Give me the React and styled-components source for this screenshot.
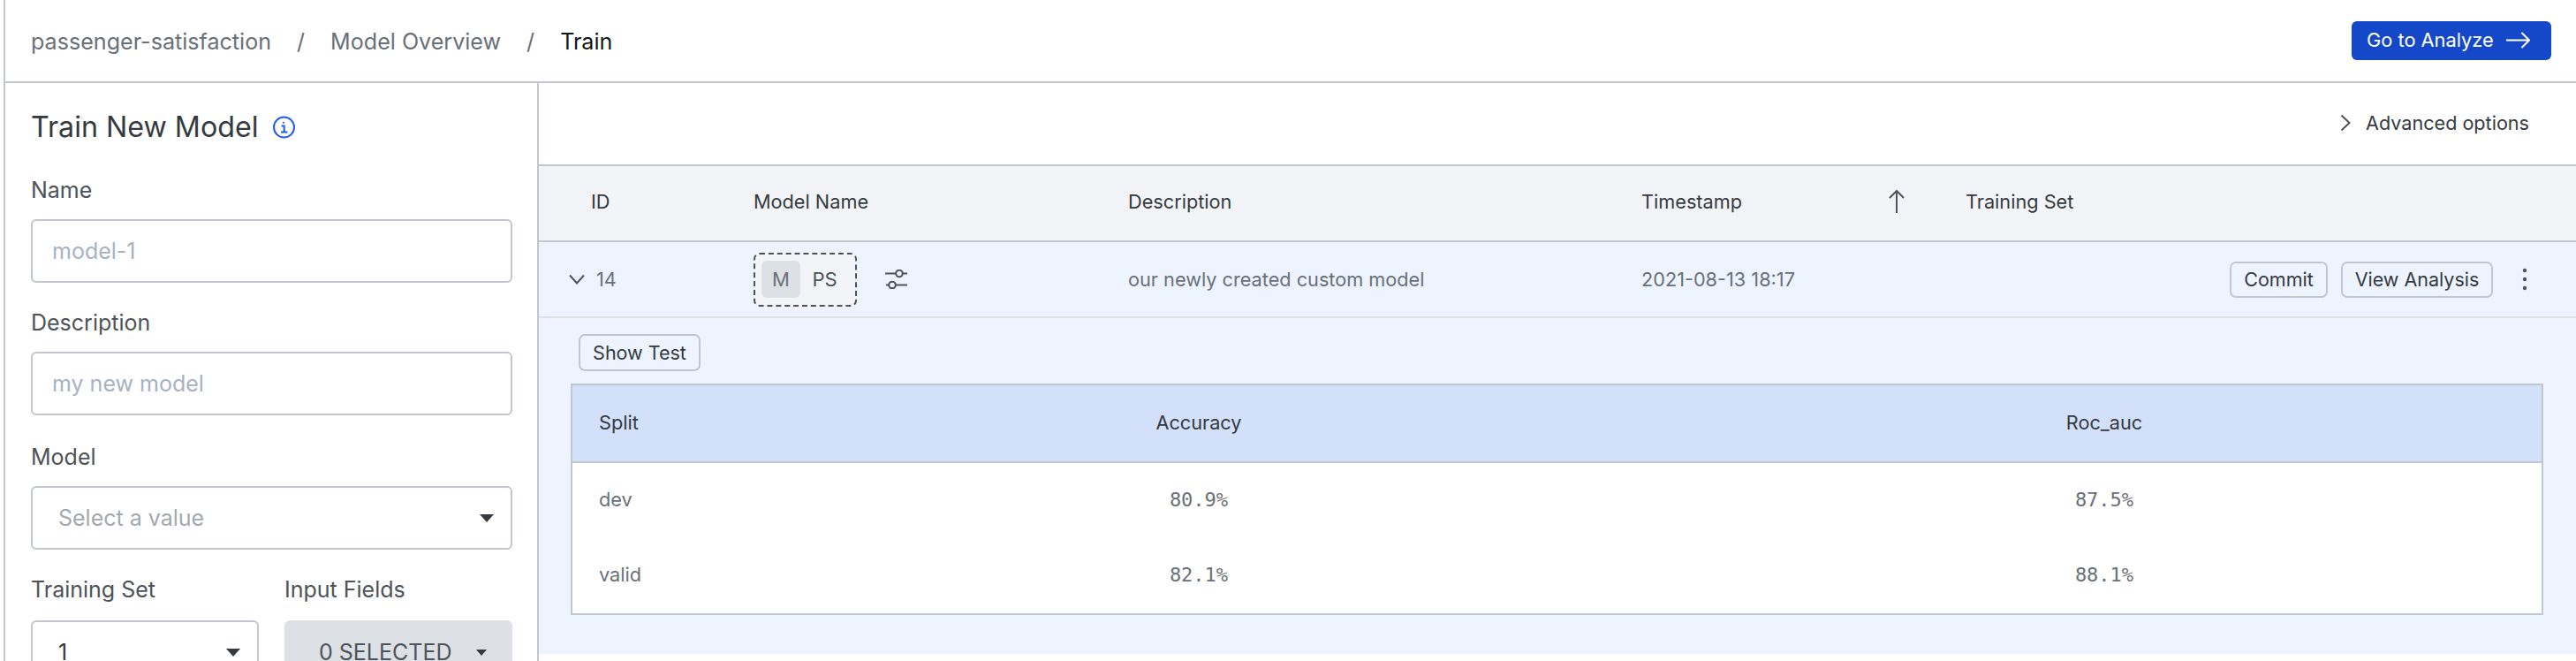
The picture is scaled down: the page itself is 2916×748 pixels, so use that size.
import React from 'react';
import styled, { createGlobalStyle } from 'styled-components';

const Global = createGlobalStyle`
  html, body { margin: 0; padding: 0; background: #fff; }
  * { box-sizing: border-box; }
  body { font-family: Inter, "Liberation Sans", sans-serif; }
`;

const line = '#c1c7cd';

const Page = styled.div`
  width: 2916px;
  height: 748px;
  padding-left: 4px;
  overflow: hidden;
  background: #fff;
`;
const Frame = styled.div`
  height: 748px;
  border-left: 2px solid ${line};
`;
const TopBar = styled.header`
  height: 94px;
  border-bottom: 2px solid ${line};
  display: flex;
  align-items: center;
  justify-content: space-between;
  padding: 0 28px 0 29px;
`;
const Crumbs = styled.nav`
  display: flex;
  align-items: center;
  margin-top: 2px;
  font-size: 25.1px;
  line-height: 32px;
  color: #697077;
`;
const Crumb = styled.span`
  color: ${(p) => (p.$active ? '#121619' : '#697077')};
`;
const Slash = styled.span`
  margin: 0 29px;
`;
const PrimaryButton = styled.button`
  width: 226px;
  height: 44px;
  border: none;
  border-radius: 6px;
  background: #1448c8;
  color: #fff;
  font: 400 21.8px Inter, sans-serif;
  display: flex;
  align-items: center;
  gap: 14px;
  padding: 0 0 2px 17px;
`;
const Body = styled.div`
  display: flex;
  height: 654px;
`;
const Sidebar = styled.aside`
  width: 604px;
  flex: none;
  border-right: 2px solid ${line};
  padding: 34px 28px 0 29px;
`;
const Title = styled.h2`
  margin: 0 0 41px;
  display: flex;
  align-items: center;
  gap: 17px;
  font-weight: 400;
  font-size: 32.2px;
  line-height: 32px;
  color: #343a3f;
`;
const Field = styled.div`
  margin-bottom: ${(p) => p.$gap ?? 31}px;
`;
const Label = styled.label`
  display: block;
  margin-bottom: ${(p) => p.$gap ?? 19}px;
  font-size: 25px;
  line-height: 28px;
  color: #4d5358;
`;
const TextInput = styled.input`
  display: block;
  width: 100%;
  height: 72px;
  border: 2px solid ${line};
  border-radius: 6px;
  padding: 0 22px;
  font: 400 25px Inter, sans-serif;
  outline: none;
  &::placeholder { color: #a7b2c2; opacity: 1; }
`;
const Select = styled.div`
  height: 72px;
  border: 2px solid ${line};
  border-radius: 6px;
  padding: 0 19px 0 29px;
  display: flex;
  align-items: center;
  justify-content: space-between;
  font-size: 25px;
  color: ${(p) => (p.$empty ? '#a2a9b0' : '#343a3f')};
`;
const Split = styled.div`
  display: grid;
  grid-template-columns: 258px 258px;
  column-gap: 29px;
`;
const MultiSelect = styled.div`
  height: 72px;
  border-radius: 6px;
  background: #dde1e6;
  display: flex;
  align-items: center;
  gap: 27px;
  padding-left: 39px;
  font-size: 25px;
  color: #4d5358;
`;
const Caret = styled.span`
  width: 0;
  height: 0;
  border-left: ${(p) => p.$size}px solid transparent;
  border-right: ${(p) => p.$size}px solid transparent;
  border-top: ${(p) => p.$size + 1}px solid #343a3f;
`;
const Main = styled.main`
  flex: 1;
  min-width: 0;
`;
const OptionsBar = styled.div`
  height: 94px;
  border-bottom: 2px solid ${line};
  display: flex;
  align-items: center;
  justify-content: flex-end;
  gap: 17px;
  padding: 0 53px 3px 0;
  font-size: 21.6px;
  color: #343a3f;
`;
const columns = '243px 424px 581px 367px 1fr';
const HeadRow = styled.div`
  height: 86px;
  border-bottom: 2px solid ${line};
  background: #f2f4f8;
  display: grid;
  grid-template-columns: ${columns};
  align-items: center;
  padding-bottom: 4px;
  font-size: 21.7px;
  color: #343a3f;
`;
const IdHead = styled.div`
  padding-left: 59px;
`;
const SortCell = styled.div`
  display: flex;
  align-items: center;
  justify-content: space-between;
  padding-right: 68px;
`;
const DataRow = styled.div`
  height: 86px;
  border-bottom: 2px solid #dde1e6;
  background: #edf4ff;
  display: grid;
  grid-template-columns: ${columns};
  align-items: center;
  font-size: 21.7px;
  color: #697077;
`;
const IdCell = styled.div`
  display: flex;
  align-items: center;
  gap: 13px;
  padding-left: 34px;
`;
const NameCell = styled.div`
  display: flex;
  align-items: center;
  gap: 32px;
`;
const Toggle = styled.div`
  width: 117px;
  height: 61px;
  border: 2px dashed #4d5358;
  border-radius: 7px;
  background: #f2f4f8;
  display: flex;
  align-items: center;
  padding-left: 7px;
`;
const ToggleItem = styled.span`
  width: ${(p) => (p.$on ? 44 : 55)}px;
  height: 42px;
  border-radius: 6px;
  background: ${(p) => (p.$on ? '#dde1e6' : 'transparent')};
  color: ${(p) => (p.$on ? '#697077' : '#4d5358')};
  display: flex;
  align-items: center;
  justify-content: center;
  font-size: 22px;
`;
const ActionCell = styled.div`
  display: flex;
  align-items: center;
  justify-content: flex-end;
  gap: 15px;
  padding-right: 55px;
`;
const OutlineButton = styled.button`
  height: ${(p) => p.$height}px;
  width: ${(p) => p.$width}px;
  flex: none;
  padding: 0;
  border: 2px solid ${line};
  border-radius: 7px;
  background: transparent;
  color: #343a3f;
  font: 400 21.5px Inter, sans-serif;
`;
const Kebab = styled.span`
  display: flex;
  margin-left: 18px;
`;
const Expanded = styled.section`
  height: 380px;
  background: #edf4ff;
  padding: 18px 37px 0 36px;
`;
const ShowRow = styled.div`
  padding-left: 9px;
  margin-bottom: 14px;
  display: flex;
`;
const InnerTable = styled.div`
  height: 262px;
  border: 2px solid ${line};
  background: #fff;
`;
const innerColumns = '179px 1060px 1fr';
const InnerHead = styled.div`
  height: 88px;
  border-bottom: 2px solid ${line};
  background: #d2e0fa;
  display: grid;
  grid-template-columns: ${innerColumns};
  align-items: center;
  font-size: 21.7px;
  color: #343a3f;
  padding-bottom: 2px;
`;
const InnerRow = styled.div`
  height: 85px;
  padding-bottom: 3px;
  display: grid;
  grid-template-columns: ${innerColumns};
  align-items: center;
  font-size: 21.7px;
  color: #697077;
`;
const SplitName = styled.div`
  padding-left: 30px;
`;
const Centered = styled.div`
  text-align: center;
`;
const Mono = styled.div`
  text-align: center;
  font-family: "DejaVu Sans Mono", "Liberation Mono", monospace;
  font-size: 22px;
`;

const Icon = styled.svg`
  display: block;
  flex: none;
  fill: none;
  stroke: ${(p) => p.$color || '#4d5358'};
  stroke-width: ${(p) => p.$stroke || 2};
`;

const results = [
  { split: 'dev', accuracy: '80.9%', roc: '87.5%' },
  { split: 'valid', accuracy: '82.1%', roc: '88.1%' },
];

export default function App() {
  return (
    <Page>
      <Global />
      <Frame>
        <TopBar>
          <Crumbs>
            <Crumb>passenger-satisfaction</Crumb>
            <Slash>/</Slash>
            <Crumb>Model Overview</Crumb>
            <Slash>/</Slash>
            <Crumb $active>Train</Crumb>
          </Crumbs>
          <PrimaryButton>
            Go to Analyze
            <Icon width="27" height="19" viewBox="0 0 27 19" $color="#fff">
              <path d="M0 9.5h25.5M17.5 1l8.5 8.5-8.5 8.5" />
            </Icon>
          </PrimaryButton>
        </TopBar>
        <Body>
          <Sidebar>
            <Title>
              Train New Model
              <Icon width="25" height="26" viewBox="0 0 25 26" $color="#1f5bf0">
                <circle cx="12.5" cy="13" r="11.5" />
                <path d="M9.5 11.5h3.2v7M9 18.5h7.5M12 7v1.5" />
              </Icon>
            </Title>
            <Field>
              <Label>Name</Label>
              <TextInput placeholder="model-1" />
            </Field>
            <Field $gap={33}>
              <Label>Description</Label>
              <TextInput placeholder="my new model" />
            </Field>
            <Field>
              <Label>Model</Label>
              <Select $empty>
                Select a value
                <Caret $size={8} />
              </Select>
            </Field>
            <Split>
              <div>
                <Label $gap={21}>Training Set</Label>
                <Select>
                  1
                  <Caret $size={8} />
                </Select>
              </div>
              <div>
                <Label $gap={21}>Input Fields</Label>
                <MultiSelect>
                  0 SELECTED
                  <Caret $size={6} />
                </MultiSelect>
              </div>
            </Split>
          </Sidebar>
          <Main>
            <OptionsBar>
              <Icon width="12" height="20" viewBox="0 0 12 20">
                <path d="M1.5 1.5l9 8.5-9 8.5" />
              </Icon>
              Advanced options
            </OptionsBar>
            <HeadRow>
              <IdHead>ID</IdHead>
              <div>Model Name</div>
              <div>Description</div>
              <SortCell>
                Timestamp
                <Icon width="20" height="28" viewBox="0 0 20 28">
                  <path d="M10 27V2M2 10l8-8 8 8" />
                </Icon>
              </SortCell>
              <div>Training Set</div>
            </HeadRow>
            <DataRow>
              <IdCell>
                <Icon width="18" height="12" viewBox="0 0 18 12">
                  <path d="M1 1.5l8 9 8-9" />
                </Icon>
                14
              </IdCell>
              <NameCell>
                <Toggle>
                  <ToggleItem $on>M</ToggleItem>
                  <ToggleItem>PS</ToggleItem>
                </Toggle>
                <Icon width="26" height="22" viewBox="0 0 26 22">
                  <path d="M0 4.5h12M20 4.5h5M1 17.5h3M12 17.5h13" />
                  <circle cx="16" cy="4.5" r="3.8" />
                  <circle cx="8" cy="17.5" r="3.8" />
                </Icon>
              </NameCell>
              <div>our newly created custom model</div>
              <div>2021-08-13 18:17</div>
              <ActionCell>
                <OutlineButton $width={111} $height={41}>Commit</OutlineButton>
                <OutlineButton $width={172} $height={41}>View Analysis</OutlineButton>
                <Kebab>
                  <svg width="6" height="26" viewBox="0 0 6 26" fill="#4d5358">
                    <circle cx="3" cy="3" r="2.2" />
                    <circle cx="3" cy="13" r="2.2" />
                    <circle cx="3" cy="23" r="2.2" />
                  </svg>
                </Kebab>
              </ActionCell>
            </DataRow>
            <Expanded>
              <ShowRow>
                <OutlineButton $width={138} $height={42}>Show Test</OutlineButton>
              </ShowRow>
              <InnerTable>
                <InnerHead>
                  <SplitName>Split</SplitName>
                  <Centered>Accuracy</Centered>
                  <Centered>Roc_auc</Centered>
                </InnerHead>
                {results.map((r) => (
                  <InnerRow key={r.split}>
                    <SplitName>{r.split}</SplitName>
                    <Mono>{r.accuracy}</Mono>
                    <Mono>{r.roc}</Mono>
                  </InnerRow>
                ))}
              </InnerTable>
            </Expanded>
          </Main>
        </Body>
      </Frame>
    </Page>
  );
}
